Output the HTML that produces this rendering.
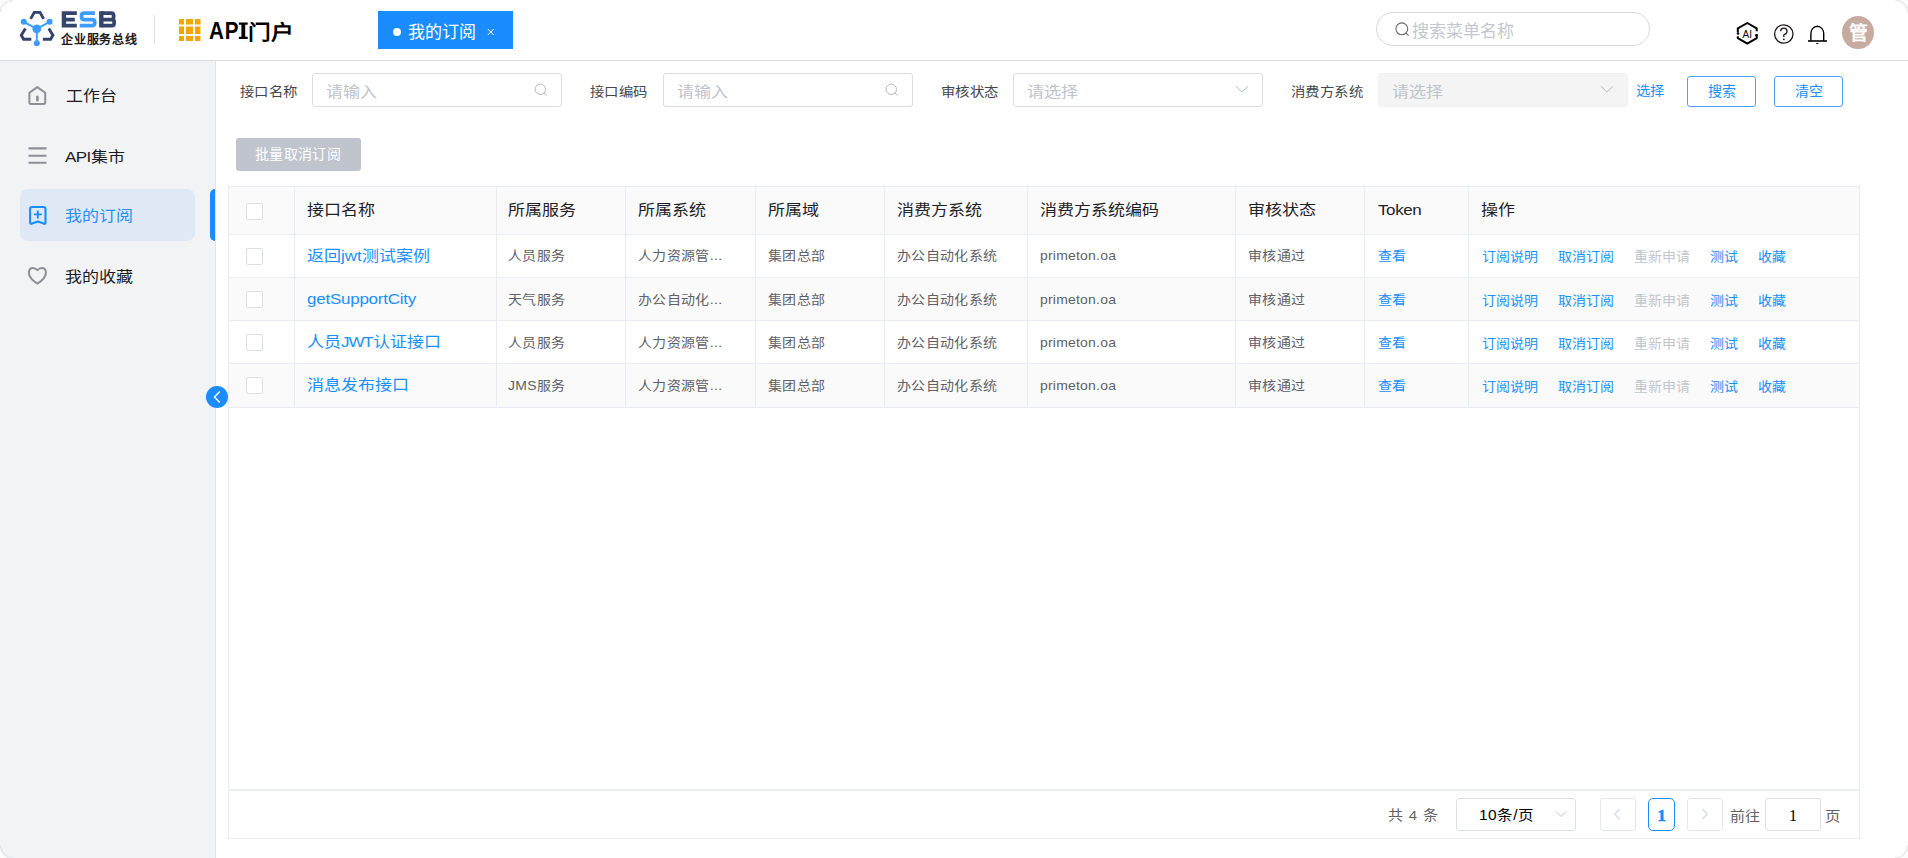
<!DOCTYPE html>
<html lang="zh-CN">
<head>
<meta charset="utf-8">
<style>
*{box-sizing:border-box;margin:0;padding:0}
html,body{width:1908px;height:858px;overflow:hidden;background:#fff}
body{font-family:"Liberation Sans",sans-serif;color:#303133;position:relative}
.abs{position:absolute}
.t{position:absolute;white-space:nowrap;line-height:1}
/* header */
#hdr{position:absolute;left:0;top:0;width:1908px;height:61px;background:#fff;border-bottom:1px solid #dbdbdb}
#side{position:absolute;left:0;top:61px;width:216px;height:797px;background:#f2f3f5;border-right:1px solid #e3e3e4}
.mi{position:absolute;left:65px;font-size:17px;color:#1d1d1f;transform:scaleY(0.9);transform-origin:50% 50%;}
.ico{position:absolute}
.lbl{position:absolute;font-size:14.4px;letter-spacing:0.45px;color:#45474d;white-space:nowrap;line-height:1;transform:scaleY(0.9);transform-origin:50% 50%;}
.inp{position:absolute;height:34px;border:1px solid #dcdde0;border-radius:3px;background:#fff}
.ph{position:absolute;font-size:17px;color:#bfc3cb;white-space:nowrap;line-height:1;transform:scaleY(0.9);transform-origin:50% 50%;}
.btn{position:absolute;height:31px;border:1px solid #4ea2f6;border-radius:3px;color:#1890ff;font-size:14px;text-align:center;line-height:28px;background:#fff}
/* table */
#tbl{position:absolute;left:228px;top:186px;width:1632px;height:653px;border:1px solid #e8ebf3}
.row{position:absolute;left:0;width:1630px;border-bottom:1px solid #e8ebf3}
.vl{position:absolute;top:0;width:1px;background:#e8ebf3}
.hd{position:absolute;font-size:17px;color:#1f2126;white-space:nowrap;line-height:1;transform:scaleY(0.9);transform-origin:50% 50%;}
.cell{position:absolute;font-size:14px;letter-spacing:0.35px;color:#5f6166;white-space:nowrap;line-height:1;transform:scaleY(0.9);transform-origin:50% 50%;}
.lnk{position:absolute;font-size:17px;color:#1890ff;white-space:nowrap;line-height:1;transform:scaleY(0.9);transform-origin:50% 50%;}
.op{position:absolute;font-size:14px;letter-spacing:0.25px;color:#1890ff;white-space:nowrap;line-height:1;transform:scaleY(0.9);transform-origin:50% 50%;}
.dis{color:#c4c6ca}
.cb{position:absolute;left:18px;width:17px;height:17px;border:1px solid #dcdfe6;border-radius:2px;background:#fff}
</style>
</head>
<body>
<div id="hdr">
  <svg class="ico" style="left:0;top:0" width="60" height="60" viewBox="0 0 60 60">
    <g fill="none" stroke="#33436b" stroke-width="2.9" stroke-linejoin="miter">
      <polyline points="30.6,18.9 34.3,12.4 40,12.4 43.6,18.9"/>
      <polyline points="25.4,28.4 21.3,35.3 23.6,39.3 31.3,39.3"/>
      <polyline points="48.8,28.4 52.9,35.3 50.6,39.3 42.9,39.3"/>
    </g>
    <g stroke="#3d9bff" stroke-width="1.9" fill="#3d9bff">
      <line x1="36.8" y1="28.8" x2="23.8" y2="21.8"/>
      <line x1="36.8" y1="28.8" x2="49.6" y2="21.8"/>
      <line x1="36.8" y1="28.8" x2="36.8" y2="43.2"/>
      <circle cx="36.8" cy="28.8" r="4.4" stroke="none"/>
      <circle cx="23.8" cy="21.8" r="3" stroke="none"/>
      <circle cx="49.6" cy="21.8" r="3" stroke="none"/>
      <circle cx="36.8" cy="43.2" r="3" stroke="none"/>
    </g>
  </svg>
  <svg class="ico" id="esb" style="left:60px;top:10px" width="60" height="20" viewBox="0 0 60 20">
    <path d="M1.7 1.2H16.8V4.9H6.1V7.8H14.8V11.5H6.1V13.7H16.8V17.4H1.7Z" fill="#34446b"/>
    <path d="M34.9 3.05H24.1Q21.55 3.05 21.55 5.6V7.1Q21.55 9.65 24.1 9.65H32.2Q34.75 9.65 34.75 12.2V13Q34.75 15.55 32.2 15.55H19.7" fill="none" stroke="#3e9cff" stroke-width="3.7"/>
    <path d="M41.3 1.2V17.4" stroke="#34446b" stroke-width="4.4"/>
    <path d="M41.3 3.05H51.2Q53.6 3.05 53.6 5.45V7.25Q53.6 9.65 51.2 9.65H41.3H51.8Q54.15 9.65 54.15 12V13.2Q54.15 15.55 51.8 15.55H41.3" fill="none" stroke="#34446b" stroke-width="3.7"/>
  </svg>
  <div class="t" id="qy" style="left:61px;top:34px;font-size:12px;letter-spacing:0.75px;color:#1a1a1a;font-weight:700">企业服务总线</div>
  <div class="abs" style="left:154px;top:15px;width:1px;height:29px;background:#dcdfe6"></div>
  <svg class="ico" style="left:179px;top:19px" width="22" height="22" viewBox="0 0 22 22" fill="#f0a800">
    <rect x="0" y="0" width="5" height="5.5"/><rect x="7" y="0" width="7" height="5.5"/><rect x="16" y="0" width="5.5" height="5.5"/>
    <rect x="0" y="7.5" width="5" height="7.5"/><rect x="7" y="7.5" width="7" height="7.5"/><rect x="16" y="7.5" width="5.5" height="7.5"/>
    <rect x="0" y="17" width="5" height="5"/><rect x="7" y="17" width="7" height="5"/><rect x="16" y="17" width="5.5" height="5"/>
  </svg>
  <div class="t" id="api" style="left:209px;top:18.6px;font-size:24px;font-weight:bold;color:#000;letter-spacing:1px;transform:scaleX(0.86);transform-origin:0 0">AP</div>
  <svg class="ico" style="left:238px;top:22px" width="11" height="18" viewBox="0 0 11 18"><path d="M0.9 0.6H9.7V2.8H7.2V14.8H9.7V17H0.9V14.8H3.4V2.8H0.9Z" fill="#000"/></svg>
  <div class="t" id="api2" style="left:247.6px;top:22px;font-size:22.7px;font-weight:bold;color:#000;transform:scaleY(0.91);transform-origin:50% 50%">门户</div>
  <div class="abs" id="tab" style="left:378px;top:11px;width:135px;height:38px;background:#1a8cff">
    <div class="abs" style="left:15px;top:17px;width:8px;height:8px;border-radius:50%;background:#fff"></div>
    <div class="t" style="left:29.5px;top:12.5px;font-size:17px;color:#fff">我的订阅</div>
    <svg class="ico" style="left:109px;top:16.5px" width="8" height="8" viewBox="0 0 8 8"><path d="M0.8 1L6.8 7M6.8 1L0.8 7" stroke="#fff" stroke-width="1"/></svg>
  </div>
  <div class="abs" id="search" style="left:1376px;top:12px;width:274px;height:34px;border:1px solid #d9dadd;border-radius:17px;background:#fff">
    <svg class="ico" style="left:18px;top:9px" width="16" height="16" viewBox="0 0 16 16"><circle cx="6.8" cy="6.8" r="5.9" fill="none" stroke="#6e6e70" stroke-width="1.15"/><path d="M11.2 11.2L13.6 13.6" stroke="#6e6e70" stroke-width="1.2"/></svg>
    <div class="t" style="left:35px;top:9.5px;font-size:17px;color:#c3c7cf">搜索菜单名称</div>
  </div>
  <svg class="ico" style="left:1735px;top:21px" width="24" height="24" viewBox="0 0 24 24">
    <g fill="none" stroke="#000" stroke-width="2" stroke-linejoin="round">
      <path d="M2.8 11.3V7.4L12.3 2 21.7 7.4V10.2"/>
      <path d="M21.7 13.2V17.2L12.3 22.6 2.8 17.2V15.2"/>
    </g>
    <circle cx="3" cy="12.5" r="1.3" fill="#000"/><circle cx="21.5" cy="14.2" r="1.3" fill="#000"/>
    <text x="12.2" y="17" font-family="Liberation Sans" font-size="10" text-anchor="middle" fill="#000">AI</text>
  </svg>
  <svg class="ico" style="left:1772px;top:22px" width="24" height="24" viewBox="0 0 24 24">
    <circle cx="11.8" cy="12" r="9.2" fill="none" stroke="#1f1a1a" stroke-width="1.3"/>
    <path d="M8.6 9.2A3.2 3.1 0 1 1 12.4 12.3Q11.8 12.7 11.8 13.6V15" fill="none" stroke="#1f1a1a" stroke-width="1.3"/>
    <circle cx="11.8" cy="17.3" r="0.9" fill="#1f1a1a"/>
  </svg>
  <svg class="ico" style="left:1806px;top:23px" width="24" height="24" viewBox="0 0 24 24">
    <path d="M4.9 17.9V10.2A6.4 6.8 0 0 1 17.7 10.2V17.9" fill="none" stroke="#000" stroke-width="1.4"/>
    <path d="M2 18H21" stroke="#000" stroke-width="1.6"/>
    <path d="M10.3 3.8L11.3 1.9 12.3 3.8Z" fill="#000"/>
    <path d="M10.3 20.5H12.3" stroke="#000" stroke-width="1"/>
  </svg>
  <div class="abs" id="avatar" style="left:1842px;top:16px;width:32px;height:33px;border-radius:50%;background:#c8aba0">
    <div class="t" style="left:6.5px;top:7.5px;font-size:19px;font-weight:bold;color:#fff">管</div>
  </div>
</div>
<div id="side">
  <svg class="ico" style="left:27px;top:24px" width="21" height="22" viewBox="0 0 21 22">
    <path d="M2.4 7.8L10.3 2.1 18.2 7.8V17.4Q18.2 18.9 16.7 18.9H3.9Q2.4 18.9 2.4 17.4Z" fill="none" stroke="#8d9096" stroke-width="2" stroke-linejoin="round"/>
    <path d="M10.4 11.9V15.2" stroke="#8d9096" stroke-width="2.6" stroke-linecap="round"/>
  </svg>
  <div class="t mi" style="top:27px;left:66px">工作台</div>
  <svg class="ico" style="left:27px;top:85px" width="21" height="20" viewBox="0 0 21 20">
    <path d="M1.5 2.4H19.5M1.5 9.8H19.5M1.5 16.8H19.5" stroke="#8d9096" stroke-width="2.1"/>
  </svg>
  <div class="t mi" style="top:88px"><span style="letter-spacing:-0.6px">API</span>集市</div>
  <div class="abs" style="left:20px;top:128px;width:175px;height:52px;border-radius:8px;background:#dfe9f6"></div>
  <div class="abs" style="left:210px;top:128px;width:5px;height:52px;border-radius:5px 0 0 5px;background:#1a8cff"></div>
  <svg class="ico" style="left:27px;top:143px" width="21" height="22" viewBox="0 0 21 22">
    <path d="M3.1 5.1Q3.1 3 5.2 3H16.4Q18.5 3 18.5 5.1V18.4Q18.5 20.4 16.6 19.6L10.8 17.6 5 19.6Q3.1 20.4 3.1 18.4Z" fill="none" stroke="#1a8cff" stroke-width="2.1" stroke-linejoin="round"/>
    <path d="M10.8 6.6V14.4M6.9 10.4H14.8" stroke="#1a8cff" stroke-width="1.9"/>
  </svg>
  <div class="t mi" style="top:147px;color:#2a8df5">我的订阅</div>
  <svg class="ico" style="left:27px;top:204px" width="21" height="20" viewBox="0 0 21 20">
    <path d="M10.4 5.1C8.8 3.3 7.3 2.9 5.9 2.9 3.6 2.9 1.9 4.8 1.9 7.7 1.9 12 6.4 16 10.4 18.6 14.4 16 18.9 12 18.9 7.7 18.9 4.8 17.2 2.9 14.9 2.9 13.5 2.9 12 3.3 10.4 5.1Z" fill="none" stroke="#8d9096" stroke-width="2" stroke-linejoin="round"/>
  </svg>
  <div class="t mi" style="top:208px">我的收藏</div>
</div>
<div class="abs" id="collapse" style="left:206px;top:386px;width:22px;height:22px;border-radius:50%;background:#1a8cff">
  <svg class="ico" style="left:0;top:0" width="22" height="22" viewBox="0 0 22 22"><path d="M13.8 5.6L8.4 11 13.8 16.4" fill="none" stroke="#fff" stroke-width="1.4"/></svg>
</div>

<!-- filters -->
<div class="lbl" style="left:240px;top:84.2px">接口名称</div>
<div class="inp" style="left:312px;top:73px;width:250px">
  <div class="ph" style="left:12.5px;top:10px">请输入</div>
  <svg class="ico" style="left:221px;top:9px" width="14" height="14" viewBox="0 0 14 14"><circle cx="6.3" cy="6.3" r="5.2" fill="none" stroke="#b6b9bf" stroke-width="1"/><path d="M10 10L12.6 12.6" stroke="#b6b9bf" stroke-width="1"/></svg>
</div>
<div class="lbl" style="left:590px;top:84.2px">接口编码</div>
<div class="inp" style="left:663px;top:73px;width:250px">
  <div class="ph" style="left:12.5px;top:10px">请输入</div>
  <svg class="ico" style="left:221px;top:9px" width="14" height="14" viewBox="0 0 14 14"><circle cx="6.3" cy="6.3" r="5.2" fill="none" stroke="#b6b9bf" stroke-width="1"/><path d="M10 10L12.6 12.6" stroke="#b6b9bf" stroke-width="1"/></svg>
</div>
<div class="lbl" style="left:941px;top:84.2px">审核状态</div>
<div class="inp" style="left:1013px;top:73px;width:250px">
  <div class="ph" style="left:12.5px;top:10px">请选择</div>
  <svg class="ico" style="left:221px;top:11px" width="14" height="10" viewBox="0 0 14 10"><path d="M1 1.2L7 7.2 13 1.2" fill="none" stroke="#a9b0bd" stroke-width="0.9"/></svg>
</div>
<div class="lbl" style="left:1291px;top:84.2px">消费方系统</div>
<div class="inp" style="left:1378px;top:73px;width:250px;background:#f4f4f5;border-color:#f1f1f2">
  <div class="ph" style="left:12.5px;top:10px">请选择</div>
  <svg class="ico" style="left:221px;top:11px" width="14" height="10" viewBox="0 0 14 10"><path d="M1 1.2L7 7.2 13 1.2" fill="none" stroke="#a9b0bd" stroke-width="0.9"/></svg>
</div>
<div class="lbl" style="left:1636px;top:83.2px;color:#1890ff">选择</div>
<div class="btn" style="left:1687px;top:76px;width:69px">搜索</div>
<div class="btn" style="left:1774px;top:76px;width:69px">清空</div>
<div class="abs" style="left:236px;top:138px;width:125px;height:33px;border-radius:3px;background:#c0c4cd;color:#fff;font-size:14px;letter-spacing:0.35px;text-align:center;line-height:33px;text-indent:-1px">批量取消订阅</div>
<!--TBL-->
<div class="abs" style="left:228px;top:186px;width:1632px;height:653px;background:#fff"></div>
<div class="abs" style="left:228px;top:186px;width:1631px;height:48px;background:#fafafa"></div>
<div class="abs" style="left:228px;top:277px;width:1631px;height:43px;background:#fafafa"></div>
<div class="abs" style="left:228px;top:363px;width:1631px;height:44px;background:#fafafa"></div>
<div class="abs" style="left:228px;top:186px;width:1632px;height:1px;background:#e9ecf3"></div>
<div class="abs" style="left:228px;top:234px;width:1632px;height:1px;background:#e9ecf3"></div>
<div class="abs" style="left:228px;top:277px;width:1632px;height:1px;background:#e9ecf3"></div>
<div class="abs" style="left:228px;top:320px;width:1632px;height:1px;background:#e9ecf3"></div>
<div class="abs" style="left:228px;top:363px;width:1632px;height:1px;background:#e9ecf3"></div>
<div class="abs" style="left:228px;top:407px;width:1632px;height:1px;background:#e9ecf3"></div>
<div class="abs" style="left:228px;top:789px;width:1632px;height:2px;background:#e9ecf3"></div>
<div class="abs" style="left:228px;top:838px;width:1632px;height:1px;background:#e9ecf3"></div>
<div class="abs" style="left:228px;top:186px;width:1px;height:653px;background:#e9ecf3"></div>
<div class="abs" style="left:294px;top:186px;width:1px;height:221px;background:#e9ecf3"></div>
<div class="abs" style="left:496px;top:186px;width:1px;height:221px;background:#e9ecf3"></div>
<div class="abs" style="left:625px;top:186px;width:1px;height:221px;background:#e9ecf3"></div>
<div class="abs" style="left:755px;top:186px;width:1px;height:221px;background:#e9ecf3"></div>
<div class="abs" style="left:884px;top:186px;width:1px;height:221px;background:#e9ecf3"></div>
<div class="abs" style="left:1027px;top:186px;width:1px;height:221px;background:#e9ecf3"></div>
<div class="abs" style="left:1235px;top:186px;width:1px;height:221px;background:#e9ecf3"></div>
<div class="abs" style="left:1364px;top:186px;width:1px;height:221px;background:#e9ecf3"></div>
<div class="abs" style="left:1468px;top:186px;width:1px;height:221px;background:#e9ecf3"></div>
<div class="abs" style="left:1859px;top:186px;width:1px;height:653px;background:#e9ecf3"></div>
<div class="hd" style="left:307px;top:202px">接口名称</div>
<div class="hd" style="left:508px;top:202px">所属服务</div>
<div class="hd" style="left:638px;top:202px">所属系统</div>
<div class="hd" style="left:768px;top:202px">所属域</div>
<div class="hd" style="left:897px;top:202px">消费方系统</div>
<div class="hd" style="left:1040px;top:202px">消费方系统编码</div>
<div class="hd" style="left:1248px;top:202px">审核状态</div>
<div class="hd" style="left:1378px;top:202px"><span style="letter-spacing:-0.4px">Token</span></div>
<div class="hd" style="left:1481px;top:202px">操作</div>
<div class="cb" style="left:246px;top:203px"></div>
<div class="cb" style="left:246px;top:248px"></div>
<div class="lnk" style="left:307px;top:248px">返回jwt测试案例</div>
<div class="cell" style="left:508px;top:249px">人员服务</div>
<div class="cell" style="left:638px;top:249px">人力资源管...</div>
<div class="cell" style="left:768px;top:249px">集团总部</div>
<div class="cell" style="left:897px;top:249px">办公自动化系统</div>
<div class="cell" style="left:1040px;top:248.5px;letter-spacing:0.2px">primeton.oa</div>
<div class="cell" style="left:1248px;top:249px">审核通过</div>
<div class="op" style="left:1378px;top:249px">查看</div>
<div class="op" style="left:1481.5px;top:249.5px">订阅说明</div>
<div class="op" style="left:1557.5px;top:249.5px">取消订阅</div>
<div class="op dis" style="left:1633.5px;top:249.5px">重新申请</div>
<div class="op" style="left:1709.5px;top:249.5px">测试</div>
<div class="op" style="left:1757.5px;top:249.5px">收藏</div>
<div class="cb" style="left:246px;top:291px"></div>
<div class="lnk" style="left:307px;top:291px"><span style="letter-spacing:-0.25px">getSupportCity</span></div>
<div class="cell" style="left:508px;top:292px">天气服务</div>
<div class="cell" style="left:638px;top:292px">办公自动化...</div>
<div class="cell" style="left:768px;top:292px">集团总部</div>
<div class="cell" style="left:897px;top:292px">办公自动化系统</div>
<div class="cell" style="left:1040px;top:291.5px;letter-spacing:0.2px">primeton.oa</div>
<div class="cell" style="left:1248px;top:292px">审核通过</div>
<div class="op" style="left:1378px;top:292px">查看</div>
<div class="op" style="left:1481.5px;top:292.5px">订阅说明</div>
<div class="op" style="left:1557.5px;top:292.5px">取消订阅</div>
<div class="op dis" style="left:1633.5px;top:292.5px">重新申请</div>
<div class="op" style="left:1709.5px;top:292.5px">测试</div>
<div class="op" style="left:1757.5px;top:292.5px">收藏</div>
<div class="cb" style="left:246px;top:334px"></div>
<div class="lnk" style="left:307px;top:334px">人员<span style="letter-spacing:-1.1px">JWT</span>认证接口</div>
<div class="cell" style="left:508px;top:335px">人员服务</div>
<div class="cell" style="left:638px;top:335px">人力资源管...</div>
<div class="cell" style="left:768px;top:335px">集团总部</div>
<div class="cell" style="left:897px;top:335px">办公自动化系统</div>
<div class="cell" style="left:1040px;top:334.5px;letter-spacing:0.2px">primeton.oa</div>
<div class="cell" style="left:1248px;top:335px">审核通过</div>
<div class="op" style="left:1378px;top:335px">查看</div>
<div class="op" style="left:1481.5px;top:335.5px">订阅说明</div>
<div class="op" style="left:1557.5px;top:335.5px">取消订阅</div>
<div class="op dis" style="left:1633.5px;top:335.5px">重新申请</div>
<div class="op" style="left:1709.5px;top:335.5px">测试</div>
<div class="op" style="left:1757.5px;top:335.5px">收藏</div>
<div class="cb" style="left:246px;top:377px"></div>
<div class="lnk" style="left:307px;top:377px">消息发布接口</div>
<div class="cell" style="left:508px;top:378px">JMS服务</div>
<div class="cell" style="left:638px;top:378px">人力资源管...</div>
<div class="cell" style="left:768px;top:378px">集团总部</div>
<div class="cell" style="left:897px;top:378px">办公自动化系统</div>
<div class="cell" style="left:1040px;top:377.5px;letter-spacing:0.2px">primeton.oa</div>
<div class="cell" style="left:1248px;top:378px">审核通过</div>
<div class="op" style="left:1378px;top:378px">查看</div>
<div class="op" style="left:1481.5px;top:378.5px">订阅说明</div>
<div class="op" style="left:1557.5px;top:378.5px">取消订阅</div>
<div class="op dis" style="left:1633.5px;top:378.5px">重新申请</div>
<div class="op" style="left:1709.5px;top:378.5px">测试</div>
<div class="op" style="left:1757.5px;top:378.5px">收藏</div>
<div class="cell" style="left:1388px;top:807.5px;font-size:15px;color:#606266;word-spacing:1px">共 4 条</div>
<div class="abs" style="left:1456px;top:798px;width:120px;height:33px;border:1px solid #dcdfe6;border-radius:3px;background:#fff"></div>
<div class="cell" style="left:1479px;top:807.5px;font-size:15.5px;color:#000">10条/页</div>
<svg class="ico" style="left:1555px;top:810px" width="12" height="8" viewBox="0 0 12 8"><path d="M1 1.5L6 6.5 11 1.5" fill="none" stroke="#c0c4cc" stroke-width="1"/></svg>
<div class="abs" style="left:1600px;top:798px;width:36px;height:33px;border:1px solid #e4e7ed;border-radius:3px;background:#fff"></div>
<svg class="ico" style="left:1612px;top:808px" width="10" height="12" viewBox="0 0 10 12"><path d="M7.6 1.2L2.8 6.2 7.6 11.2" fill="none" stroke="#dde2ea" stroke-width="1.7"/></svg>
<div class="abs" style="left:1648px;top:798px;width:27px;height:33px;border:1px solid #1a8cff;border-radius:5px;background:#fff"></div>
<div class="t" style="left:1657.3px;top:806.8px;font-family:'Liberation Serif',serif;font-weight:bold;font-size:17.5px;color:#1a8cff;-webkit-text-stroke:0.5px #1a8cff">1</div>
<div class="abs" style="left:1687px;top:798px;width:36px;height:33px;border:1px solid #e4e7ed;border-radius:3px;background:#fff"></div>
<svg class="ico" style="left:1700px;top:808px" width="10" height="12" viewBox="0 0 10 12"><path d="M2.4 1.2L7.2 6.2 2.4 11.2" fill="none" stroke="#dde2ea" stroke-width="1.7"/></svg>
<div class="cell" style="left:1730px;top:809px;font-size:15px;color:#606266">前往</div>
<div class="abs" style="left:1765px;top:798px;width:56px;height:33px;border:1px solid #dcdfe6;border-radius:3px;background:#fff"></div>
<div class="t" style="left:1789px;top:808px;font-family:'Liberation Serif',serif;font-size:16px;color:#000">1</div>
<div class="cell" style="left:1825px;top:809px;font-size:15.5px;color:#606266">页</div>
<!--/TBL-->
<svg class="abs" style="left:0;top:0;z-index:50" width="1908" height="858" viewBox="0 0 1908 858">
  <g fill="#fcfcfc">
    <path d="M0 0H12A12 12 0 0 0 0 12Z"/>
    <path d="M1908 0H1896A12 12 0 0 1 1908 12Z"/>
    <path d="M0 858H12A12 12 0 0 1 0 846Z"/>
    <path d="M1908 858H1896A12 12 0 0 0 1908 846Z"/>
  </g>
  <g fill="none" stroke="#dedede" stroke-width="1.2" opacity="0.8">
    <path d="M0.4 12.5A12 12 0 0 1 12.5 0.4"/>
    <path d="M1895.5 0.4A12 12 0 0 1 1907.6 12.5"/>
    <path d="M0.4 845.5A12 12 0 0 0 12.5 857.6"/>
    <path d="M1895.5 857.6A12 12 0 0 0 1907.6 845.5"/>
  </g>
</svg>
</body>
</html>
